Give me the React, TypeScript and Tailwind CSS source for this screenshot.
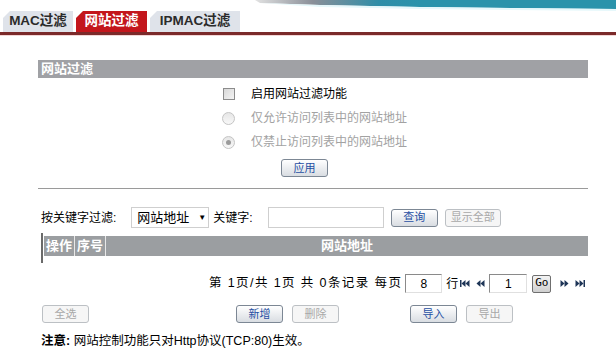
const font = "font-['Liberation_Sans','Noto_Sans_CJK_SC',sans-serif]";

function Btn({ label, disabled, w = 'w-[47px]' }: { label: string; disabled?: boolean; w?: string }) {
  return (
    <div
      className={`${w} h-[18px] flex items-center justify-center rounded-[3px] border text-[11px] leading-none ${
        disabled
          ? 'border-[#bcc0c4] bg-[#f6f6f6] text-[#a8a8a8]'
          : 'border-[#7c8794] bg-gradient-to-b from-white to-[#d9dde2] text-[#1f4fa3]'
      }`}
    >
      {label}
    </div>
  );
}

function Radio({ checked }: { checked?: boolean }) {
  return (
    <div className="w-[13px] h-[13px] rounded-full border border-[#c4c4c4] bg-gradient-to-b from-[#e6e6e6] to-[#f8f8f8] flex items-center justify-center">
      {checked && <div className="w-[5px] h-[5px] rounded-full bg-[#9a9a9a]" />}
    </div>
  );
}

function Tab({ label, active, w }: { label: string; active?: boolean; w: string }) {
  return (
    <div
      className={`${w} h-[21px] flex items-center justify-center text-[13.5px] font-bold [clip-path:polygon(7px_0,100%_0,100%_100%,0_100%,0_7px)] ${
        active ? 'bg-[#c3161c] text-white' : 'bg-[#dfe3ea] text-[#2b2b2b]'
      }`}
    >
      {label}
    </div>
  );
}

function PageIcon({ dir, bar }: { dir: 'l' | 'r'; bar?: boolean }) {
  return (
    <svg width="10" height="9" viewBox="0 0 10 9" className="block">
      {dir === 'l' ? (
        <g fill="#1e3557">
          {bar && <rect x="0" y="1" width="1.5" height="7" />}
          <polygon points="1.5,4.5 5.5,1 5.5,8" />
          <polygon points="5.5,4.5 9.5,1 9.5,8" />
        </g>
      ) : (
        <g fill="#1e3557">
          <polygon points="0.5,1 4.5,4.5 0.5,8" />
          <polygon points="4.5,1 8.5,4.5 4.5,8" />
          {bar && <rect x="8.5" y="1" width="1.5" height="7" />}
        </g>
      )}
    </svg>
  );
}

export default function App() {
  return (
    <div className={`w-[616px] h-[358px] bg-white overflow-hidden text-[12px] text-black ${font}`}>
      <svg width="616" height="11" className="block">
        <defs>
          <linearGradient id="band" x1="255" y1="0" x2="420" y2="0" gradientUnits="userSpaceOnUse">
            <stop offset="0" stopColor="#e2e2e2" />
            <stop offset="0.35" stopColor="#8a8f98" />
            <stop offset="0.75" stopColor="#2f8ea8" />
            <stop offset="1" stopColor="#2a93ab" />
          </linearGradient>
        </defs>
        <polygon points="255,0 616,0 616,9 420,7 320,5 260,3" fill="url(#band)" />
        <polygon points="260,3 320,5 420,7 616,9 616,11 420,9 320,7" fill="#e6f8fb" />
      </svg>

      <div className="flex items-end gap-[3px] pl-[3px] h-[21px]">
        <Tab label="MAC过滤" w="w-[70px]" />
        <Tab label="网站过滤" w="w-[71px]" active />
        <Tab label="IPMAC过滤" w="w-[90px]" />
      </div>
      <div className="h-[3px] bg-[#7b2a2a]" />
      <div className="h-[1px] bg-[#f3d6d6]" />

      <div className="ml-[38px] w-[550px] mt-[24px]">
        <div className="h-[18px] bg-[#a0a1a5] text-white font-bold text-[13px] leading-[18px] pl-[3px]">
          网站过滤
        </div>

        <div className="pl-[185px] pt-[4px]">
          <div className="h-[24px] flex items-center">
            <div className="w-[12px] h-[12px] border border-[#8c8c8c] bg-gradient-to-br from-[#d8d8d8] to-[#f4f4f4]" />
            <span className="ml-[16px]">启用网站过滤功能</span>
          </div>
          <div className="h-[24px] flex items-center text-[#a2a2a2]">
            <div className="ml-[-1px]"><Radio /></div>
            <span className="ml-[16px]">仅允许访问列表中的网站地址</span>
          </div>
          <div className="h-[24px] flex items-center text-[#a2a2a2]">
            <div className="ml-[-1px]"><Radio checked /></div>
            <span className="ml-[16px]">仅禁止访问列表中的网站地址</span>
          </div>
        </div>
        <div className="ml-[243px] mt-[5px]">
          <Btn label="应用" />
        </div>

        <div className="mt-[11px] border-t border-[#9a9a9a]" />

        <div className="mt-[18px] h-[21px] flex items-center pl-[3px]">
          <span>按关键字过滤:</span>
          <div className="ml-[15px] w-[78px] h-[21px] border border-[#cfcfcf] flex items-center pl-[5px] text-[13px]">
            <span>网站地址</span>
            <span className="ml-[9px] text-[8px]">▼</span>
          </div>
          <span className="ml-[4px]">关键字:</span>
          <div className="ml-[15px] w-[116px] h-[21px] border border-[#cfcfcf] bg-white" />
          <div className="ml-[7px]"><Btn label="查询" /></div>
          <div className="ml-[7px]"><Btn label="显示全部" disabled w="w-[56px]" /></div>
        </div>

        <div className="mt-[5px] ml-[3px] border-l-2 border-[#6a6a6a] h-[30px] pt-[3px] pl-[1px]">
          <div className="h-[20px] bg-[#9b9ea1] flex items-stretch text-white font-bold text-[13px]">
            <div className="w-[31px] border-r border-[#e8e8e8] flex items-center justify-center">操作</div>
            <div className="w-[31px] border-r border-[#e8e8e8] flex items-center justify-center">序号</div>
            <div className="flex-1 flex items-center justify-center">网站地址</div>
          </div>
        </div>

        <div className="mt-[11px] h-[19px] flex items-center pl-[171px]">
          <span className="whitespace-pre text-[12.5px] tracking-[1.4px]">第 1页/共 1页 共 0条记录 每页</span>
          <div className="ml-[3px] w-[37px] h-[19px] border-t border-l border-[#8a8a8a] border-r border-b border-r-[#e0e0e0] border-b-[#e0e0e0] flex items-center justify-center">8</div>
          <span className="ml-[4px]">行</span>
          <div className="ml-[2px]"><PageIcon dir="l" bar /></div>
          <div className="ml-[5px]"><PageIcon dir="l" /></div>
          <div className="ml-[4px] w-[38px] h-[19px] border-t border-l border-[#8a8a8a] border-r border-b border-r-[#e0e0e0] border-b-[#e0e0e0] flex items-center justify-center">1</div>
          <div className="ml-[5px] w-[19px] h-[18px] rounded-[2px] border border-[#6f6f6f] bg-gradient-to-b from-[#f4f4f4] to-[#cfcfcf] flex items-center justify-center text-[11px] font-['DejaVu_Sans_Mono',monospace]">Go</div>
          <div className="ml-[9px]"><PageIcon dir="r" /></div>
          <div className="ml-[5px]"><PageIcon dir="r" bar /></div>
        </div>

        <div className="mt-[12px] flex items-center pl-[4px]">
          <Btn label="全选" disabled />
          <div className="ml-[147px]"><Btn label="新增" /></div>
          <div className="ml-[9px]"><Btn label="删除" disabled /></div>
          <div className="ml-[71px]"><Btn label="导入" /></div>
          <div className="ml-[9px]"><Btn label="导出" disabled /></div>
        </div>

        <div className="mt-[9px] pl-[3px] text-[12.5px]">
          <span className="font-bold">注意:</span>
          <span> 网站控制功能只对Http协议(TCP:80)生效。</span>
        </div>
      </div>
    </div>
  );
}
